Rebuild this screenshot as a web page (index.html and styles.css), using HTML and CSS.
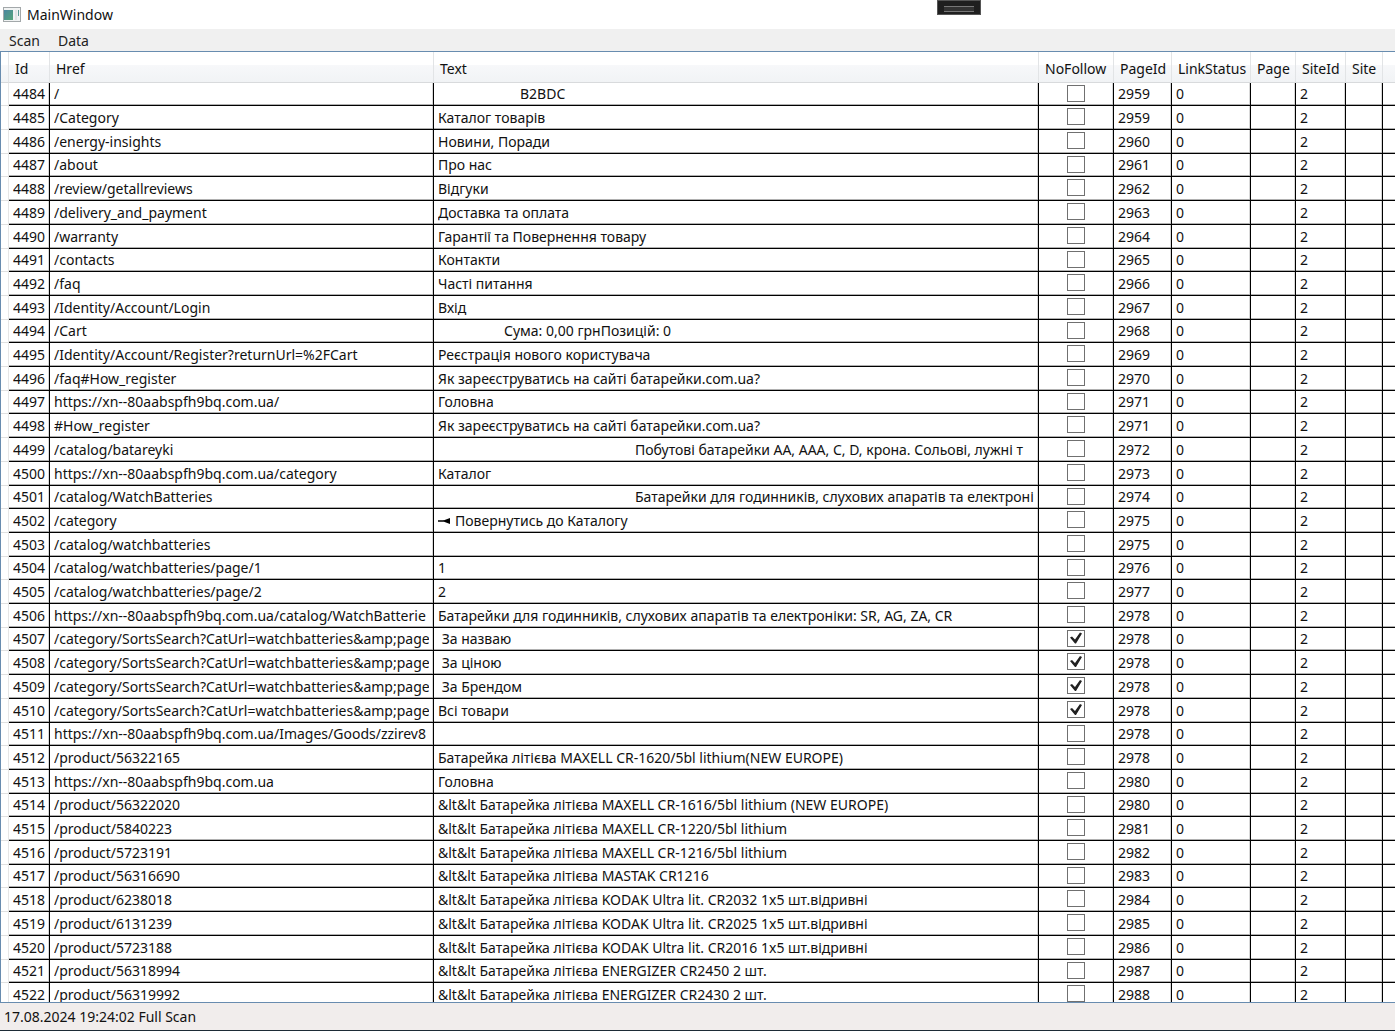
FILE: index.html
```html
<!DOCTYPE html>
<html lang="uk">
<head>
<meta charset="utf-8">
<title>MainWindow</title>
<link rel="stylesheet" href="styles.css">
</head>
<body>
<header class="titlebar">
  <svg class="app-icon" viewBox="0 0 18 15" aria-hidden="true">
    <defs><linearGradient id="pane" x1="0" y1="0" x2="1" y2="1"><stop offset="0" stop-color="#4a86a0"/><stop offset="1" stop-color="#55a679"/></linearGradient></defs>
    <rect x=".5" y=".5" width="17" height="14" fill="#f1f3f3" stroke="#a3a8aa"/>
    <rect x="1" y="3" width="9" height="10" fill="url(#pane)"/>
    <rect x="12" y="3" width="2" height="10" fill="#dfe4e4"/>
    <rect x="15" y="3" width="1" height="6" fill="#5b9a94"/>
  </svg>
  <h1 class="title">MainWindow</h1>
  <button class="debug-handle" type="button" aria-label="Toolbar"></button>
</header>
<nav class="menu">
  <button class="menu-item" type="button">Scan</button>
  <button class="menu-item" type="button">Data</button>
</nav>
<main class="grid-area">
<table class="grid">
<colgroup><col class="c-head"><col class="c-id"><col class="c-href"><col class="c-text"><col class="c-nofollow"><col class="c-pageid"><col class="c-status"><col class="c-page"><col class="c-siteid"><col class="c-site"><col class="c-rest"></colgroup>
<thead>
<tr><td></td><th>Id</th><th>Href</th><th>Text</th><th id="nf">NoFollow</th><th>PageId</th><th>LinkStatus</th><th>Page</th><th>SiteId</th><th>Site</th><td></td></tr>
</thead>
<tbody>
<tr><td><td>4484<td>/<td><span class="indent-m">B2BDC</span><td><input type="checkbox" aria-labelledby="nf"><td>2959<td>0<td><td>2<td><td></tr>
<tr><td><td>4485<td>/Category<td>Каталог товарів<td><input type="checkbox" aria-labelledby="nf"><td>2959<td>0<td><td>2<td><td></tr>
<tr><td><td>4486<td>/energy-insights<td>Новини, Поради<td><input type="checkbox" aria-labelledby="nf"><td>2960<td>0<td><td>2<td><td></tr>
<tr><td><td>4487<td>/about<td>Про нас<td><input type="checkbox" aria-labelledby="nf"><td>2961<td>0<td><td>2<td><td></tr>
<tr><td><td>4488<td>/review/getallreviews<td>Відгуки<td><input type="checkbox" aria-labelledby="nf"><td>2962<td>0<td><td>2<td><td></tr>
<tr><td><td>4489<td>/delivery_and_payment<td>Доставка та оплата<td><input type="checkbox" aria-labelledby="nf"><td>2963<td>0<td><td>2<td><td></tr>
<tr><td><td>4490<td>/warranty<td>Гарантії та Повернення товару<td><input type="checkbox" aria-labelledby="nf"><td>2964<td>0<td><td>2<td><td></tr>
<tr><td><td>4491<td>/contacts<td>Контакти<td><input type="checkbox" aria-labelledby="nf"><td>2965<td>0<td><td>2<td><td></tr>
<tr><td><td>4492<td>/faq<td>Часті питання<td><input type="checkbox" aria-labelledby="nf"><td>2966<td>0<td><td>2<td><td></tr>
<tr><td><td>4493<td>/Identity/Account/Login<td>Вхід<td><input type="checkbox" aria-labelledby="nf"><td>2967<td>0<td><td>2<td><td></tr>
<tr><td><td>4494<td>/Cart<td><span class="indent-s">Сума: 0,00 грнПозицій: 0</span><td><input type="checkbox" aria-labelledby="nf"><td>2968<td>0<td><td>2<td><td></tr>
<tr><td><td>4495<td>/Identity/Account/Register?returnUrl=%2FCart<td>Реєстрація нового користувача<td><input type="checkbox" aria-labelledby="nf"><td>2969<td>0<td><td>2<td><td></tr>
<tr><td><td>4496<td>/faq#How_register<td>Як зареєструватись на сайті батарейки.com.ua?<td><input type="checkbox" aria-labelledby="nf"><td>2970<td>0<td><td>2<td><td></tr>
<tr><td><td>4497<td>https://xn--80aabspfh9bq.com.ua/<td>Головна<td><input type="checkbox" aria-labelledby="nf"><td>2971<td>0<td><td>2<td><td></tr>
<tr><td><td>4498<td>#How_register<td>Як зареєструватись на сайті батарейки.com.ua?<td><input type="checkbox" aria-labelledby="nf"><td>2971<td>0<td><td>2<td><td></tr>
<tr><td><td>4499<td>/catalog/batareyki<td><span class="indent-l">Побутові батарейки АА, ААА, C, D, крона. Сольові, лужні т</span><td><input type="checkbox" aria-labelledby="nf"><td>2972<td>0<td><td>2<td><td></tr>
<tr><td><td>4500<td>https://xn--80aabspfh9bq.com.ua/category<td>Каталог<td><input type="checkbox" aria-labelledby="nf"><td>2973<td>0<td><td>2<td><td></tr>
<tr><td><td>4501<td>/catalog/WatchBatteries<td><span class="indent-l">Батарейки для годинників, слухових апаратів та електроні</span><td><input type="checkbox" aria-labelledby="nf"><td>2974<td>0<td><td>2<td><td></tr>
<tr><td><td>4502<td>/category<td><svg class="back" viewBox="0 0 13 6" aria-hidden="true"><path d="M0 2.2H6V3.8H0ZM4 3L12 0V6Z"/></svg>Повернутись до Каталогу<td><input type="checkbox" aria-labelledby="nf"><td>2975<td>0<td><td>2<td><td></tr>
<tr><td><td>4503<td>/catalog/watchbatteries<td><td><input type="checkbox" aria-labelledby="nf"><td>2975<td>0<td><td>2<td><td></tr>
<tr><td><td>4504<td>/catalog/watchbatteries/page/1<td>1<td><input type="checkbox" aria-labelledby="nf"><td>2976<td>0<td><td>2<td><td></tr>
<tr><td><td>4505<td>/catalog/watchbatteries/page/2<td>2<td><input type="checkbox" aria-labelledby="nf"><td>2977<td>0<td><td>2<td><td></tr>
<tr><td><td>4506<td>https://xn--80aabspfh9bq.com.ua/catalog/WatchBatterie<td>Батарейки для годинників, слухових апаратів та електроніки: SR, AG, ZA, CR<td><input type="checkbox" aria-labelledby="nf"><td>2978<td>0<td><td>2<td><td></tr>
<tr><td><td>4507<td>/category/SortsSearch?CatUrl=watchbatteries&amp;amp;page<td>&nbsp;За назваю<td><input type="checkbox" aria-labelledby="nf" checked><td>2978<td>0<td><td>2<td><td></tr>
<tr><td><td>4508<td>/category/SortsSearch?CatUrl=watchbatteries&amp;amp;page<td>&nbsp;За ціною<td><input type="checkbox" aria-labelledby="nf" checked><td>2978<td>0<td><td>2<td><td></tr>
<tr><td><td>4509<td>/category/SortsSearch?CatUrl=watchbatteries&amp;amp;page<td>&nbsp;За Брендом<td><input type="checkbox" aria-labelledby="nf" checked><td>2978<td>0<td><td>2<td><td></tr>
<tr><td><td>4510<td>/category/SortsSearch?CatUrl=watchbatteries&amp;amp;page<td>Всі товари<td><input type="checkbox" aria-labelledby="nf" checked><td>2978<td>0<td><td>2<td><td></tr>
<tr><td><td>4511<td>https://xn--80aabspfh9bq.com.ua/Images/Goods/zzirev8<td><td><input type="checkbox" aria-labelledby="nf"><td>2978<td>0<td><td>2<td><td></tr>
<tr><td><td>4512<td>/product/56322165<td>Батарейка літієва MAXELL CR-1620/5bl lithium(NEW EUROPE)<td><input type="checkbox" aria-labelledby="nf"><td>2978<td>0<td><td>2<td><td></tr>
<tr><td><td>4513<td>https://xn--80aabspfh9bq.com.ua<td>Головна<td><input type="checkbox" aria-labelledby="nf"><td>2980<td>0<td><td>2<td><td></tr>
<tr><td><td>4514<td>/product/56322020<td>&amp;lt&amp;lt Батарейка літієва MAXELL CR-1616/5bl lithium (NEW EUROPE)<td><input type="checkbox" aria-labelledby="nf"><td>2980<td>0<td><td>2<td><td></tr>
<tr><td><td>4515<td>/product/5840223<td>&amp;lt&amp;lt Батарейка літієва MAXELL CR-1220/5bl lithium<td><input type="checkbox" aria-labelledby="nf"><td>2981<td>0<td><td>2<td><td></tr>
<tr><td><td>4516<td>/product/5723191<td>&amp;lt&amp;lt Батарейка літієва MAXELL CR-1216/5bl lithium<td><input type="checkbox" aria-labelledby="nf"><td>2982<td>0<td><td>2<td><td></tr>
<tr><td><td>4517<td>/product/56316690<td>&amp;lt&amp;lt Батарейка літієва MASTAK CR1216<td><input type="checkbox" aria-labelledby="nf"><td>2983<td>0<td><td>2<td><td></tr>
<tr><td><td>4518<td>/product/6238018<td>&amp;lt&amp;lt Батарейка літієва KODAK Ultra lit. CR2032 1x5 шт.відривні<td><input type="checkbox" aria-labelledby="nf"><td>2984<td>0<td><td>2<td><td></tr>
<tr><td><td>4519<td>/product/6131239<td>&amp;lt&amp;lt Батарейка літієва KODAK Ultra lit. CR2025 1x5 шт.відривні<td><input type="checkbox" aria-labelledby="nf"><td>2985<td>0<td><td>2<td><td></tr>
<tr><td><td>4520<td>/product/5723188<td>&amp;lt&amp;lt Батарейка літієва KODAK Ultra lit. CR2016 1x5 шт.відривні<td><input type="checkbox" aria-labelledby="nf"><td>2986<td>0<td><td>2<td><td></tr>
<tr><td><td>4521<td>/product/56318994<td>&amp;lt&amp;lt Батарейка літієва ENERGIZER CR2450 2 шт.<td><input type="checkbox" aria-labelledby="nf"><td>2987<td>0<td><td>2<td><td></tr>
<tr><td><td>4522<td>/product/56319992<td>&amp;lt&amp;lt Батарейка літієва ENERGIZER CR2430 2 шт.<td><input type="checkbox" aria-labelledby="nf"><td>2988<td>0<td><td>2<td><td></tr>
</tbody>
</table>
</main>
<footer class="status">17.08.2024 19:24:02 Full Scan</footer>
</body>
</html>
```
FILE: styles.css
```css
* { box-sizing: border-box; }

body {
  margin: 0;
  height: 100vh;
  display: flex;
  flex-direction: column;
  overflow: hidden;
  background: #fff;
  color: #111;
  font: 14px/22px "Noto Sans", "Open Sans", sans-serif;
}

.titlebar {
  position: relative;
  flex: none;
  display: flex;
  align-items: center;
  gap: 6px;
  height: 29px;
  padding-left: 3px;
}
.app-icon { width: 18px; height: 15px; }
.title { margin: 0; font-size: 14px; font-weight: 400; }
.debug-handle {
  position: absolute;
  top: 0;
  left: 937px;
  width: 44px;
  height: 15px;
  padding: 5px 6px;
  border: 1px solid #555;
  background: #1f1f1f;
}
.debug-handle::before {
  content: "";
  display: block;
  height: 4px;
  border: solid #777;
  border-width: 1px 0;
  background: #333;
}

.menu {
  flex: none;
  display: flex;
  gap: 18px;
  height: 22px;
  padding: 1px 0 0 9px;
  background: #f0f0f0;
}
.menu-item {
  padding: 0;
  border: 0;
  background: none;
  color: #222;
  font: inherit;
}

.grid-area {
  flex: 1;
  min-height: 0;
  overflow: hidden;
  border: solid #688caf;
  border-width: 1px 0 1px 1px;
}
.grid {
  width: 100%;
  table-layout: fixed;
  border-collapse: separate;
  border-spacing: 0;
}
.c-head { width: 8px; }
.c-id { width: 41px; }
.c-href { width: 384px; }
.c-nofollow { width: 75px; }
.c-pageid { width: 58px; }
.c-status { width: 79px; }
.c-page { width: 45px; }
.c-siteid { width: 50px; }
.c-site { width: 37px; }
.c-rest { width: 12px; }

.grid thead th,
.grid thead td {
  height: 31px;
  padding: 4px 0 0 6px;
  border-right: 1px solid #e2e4e6;
  border-bottom: 1px solid #d8dadc;
  background: linear-gradient(#fff 0, #fff 13px, #f7f8fa 13px, #f1f3f5 100%);
  font-weight: 400;
  text-align: left;
  white-space: nowrap;
}
.grid thead td { padding: 0; }
.grid thead td:last-child { border-right: 0; }

.grid tbody td {
  height: 24px;
  padding: 0 4px;
  border-right: 1px solid #000;
  border-bottom: 1px solid #000;
  box-shadow: inset 0 -1px #b0b0b0, inset -1px 0 #d8d8d8;
  line-height: 22px;
  white-space: nowrap;
  overflow: clip;
  overflow-clip-margin: content-box;
}
/* The 23.7px row pitch falls on whole pixels as seven tall and three short rows */
.grid tbody tr:nth-child(10n+1) td,
.grid tbody tr:nth-child(10n+4) td,
.grid tbody tr:nth-child(10n+8) td { height: 23px; }

.grid tbody td:first-child {
  padding: 0;
  border-right-color: #e6e6e6;
  border-bottom-color: #e0e0e0;
  box-shadow: none;
}
.grid tbody td:last-child {
  border-right: 0;
  box-shadow: inset 0 -1px #b0b0b0;
}
.grid tbody td:nth-child(2) { padding-right: 0; }
.grid tbody td:nth-child(5) { padding: 0; text-align: center; }

.indent-s { padding-left: 66px; }
.indent-m { padding-left: 82px; }
.indent-l { padding-left: 197px; }
.back { width: 13px; height: 6px; margin-right: 4px; vertical-align: 2px; }

input[type="checkbox"] {
  appearance: none;
  display: block;
  width: 18px;
  height: 17px;
  margin: 0 auto 2px;
  border: 1px solid #707070;
  background: #fff;
}
input[type="checkbox"]:checked::before {
  content: "";
  display: block;
  height: 15px;
  background: #212121;
  clip-path: polygon(2px 7px, 4px 6px, 7px 9px, 12px 2px, 14px 3px, 8px 13px, 7px 13px);
}

.status {
  flex: none;
  height: 28px;
  padding: 3px 4px;
  border-bottom: 1px solid #1d2b36;
  background: #f1edec;
}
```
